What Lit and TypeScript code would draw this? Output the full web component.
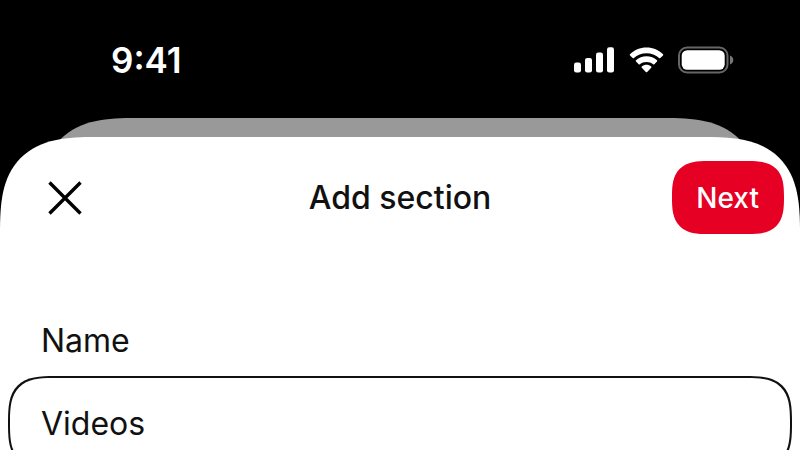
import { LitElement, html, css } from "lit";
import { customElement, state } from "lit/decorators.js";

@customElement("status-bar")
class StatusBar extends LitElement {
  static styles = css`
    :host {
      display: flex;
      align-items: center;
      justify-content: space-between;
      box-sizing: border-box;
      height: 118px;
      padding: 2px 66px 0 111px;
      color: #fff;
    }
    .time {
      font-size: 35px;
      line-height: 40px;
      font-weight: 600;
    }
    .icons {
      display: flex;
      align-items: center;
      gap: 14px;
    }
    svg {
      display: block;
    }
  `;

  render() {
    return html`
      <span class="time">9:41</span>
      <div class="icons">
        <svg width="41" height="26" viewBox="0 0 41 26" fill="#fff" role="img" aria-label="Signal">
          <rect x="0" y="15.5" width="7" height="10" rx="2.2" />
          <rect x="11" y="11" width="7" height="14.5" rx="2.2" />
          <rect x="22" y="5.5" width="7" height="20" rx="2.2" />
          <rect x="33" y="0.3" width="7" height="25.2" rx="2.2" />
        </svg>
        <svg width="35" height="26" viewBox="0 0 35 26" fill="#fff" role="img" aria-label="Wi-Fi">
          <path d="M17.5 0.5C24 0.5 29.9 3 34 7.2Q34.6 7.8 34 8.4L31.3 11.1Q30.7 11.6 30.1 11.1C26.8 8 22.3 6.2 17.5 6.2S8.200 8 4.900 11.100Q4.300 11.600 3.700 11.100L1 8.400Q0.400 7.800 1 7.200C5.100 3 11 0.500 17.500 0.500Z" />
          <path d="M17.5 9.200C21.500 9.200 25.200 10.700 28 13.300Q28.600 13.900 28 14.500L25.300 17.200Q24.700 17.700 24.100 17.200C22.300 15.700 20 14.900 17.500 14.900S12.700 15.700 10.900 17.200Q10.300 17.700 9.700 17.200L7 14.500Q6.400 13.900 7 13.300C9.800 10.700 13.500 9.200 17.500 9.200Z" />
          <path d="M17.500 17.800C19.300 17.800 20.900 18.400 22.200 19.500Q22.800 20.100 22.200 20.700L18.200 24.900Q17.500 25.500 16.800 24.900L12.800 20.700Q12.200 20.100 12.800 19.500C14.100 18.400 15.700 17.800 17.500 17.800Z" />
        </svg>
        <svg width="56" height="28" viewBox="0 0 56 28" role="img" aria-label="Battery">
          <rect x="1" y="1.5" width="48.5" height="25" rx="8" fill="none" stroke="#666" stroke-width="2" />
          <rect x="3.7" y="4.2" width="43" height="19.6" rx="5.5" fill="#fff" />
          <path d="M52 9.500C54 10.300 55.300 12 55.300 14S54 17.700 52 18.500Z" fill="#777" />
        </svg>
      </div>
    `;
  }
}

@customElement("app-root")
class AppRoot extends LitElement {
  static styles = css`
    :host {
      display: flex;
      flex-direction: column;
      height: 100vh;
      overflow: hidden;
      background: #000;
      color: #111;
      font-family: Inter, "Liberation Sans", sans-serif;
    }
    status-bar {
      flex: none;
    }
    .behind {
      flex: none;
      height: 100px;
      margin: 0 5% -81px;
      background: #999;
      border-radius: 96px 96px 0 0;
      corner-shape: superellipse(1.5);
    }
    .sheet {
      flex: 1 0 auto;
      background: #fff;
      border-radius: 96px 96px 0 0;
      corner-shape: superellipse(1.5);
    }
    .bar {
      display: grid;
      grid-template-columns: 1fr auto 1fr;
      align-items: center;
      padding: 24px 16px 0 40px;
    }
    h1 {
      margin: 0;
      padding-right: 24px;
      font-size: 32px;
      line-height: 40px;
      font-weight: 500;
    }
    button {
      border: 0;
      font: inherit;
      cursor: pointer;
    }
    .close {
      justify-self: start;
      padding: 8px;
      background: none;
      color: #000;
    }
    .close svg {
      display: block;
    }
    .next {
      justify-self: end;
      height: 73px;
      padding: 0 25px 0 24px;
      border-radius: 36px;
      corner-shape: superellipse(1.5);
      background: #e60023;
      color: #fff;
      font-size: 28px;
      line-height: 40px;
      font-weight: 500;
    }
    .field {
      display: flex;
      flex-direction: column;
      gap: 15px;
      padding: 87px 8px 0;
    }
    label {
      padding: 0 33px;
      font-size: 32px;
      line-height: 40px;
      color: #111;
    }
    input {
      box-sizing: border-box;
      width: 100%;
      height: 94px;
      padding: 0 31px;
      border: 2px solid #111;
      border-radius: 47px;
      corner-shape: superellipse(1.6);
      outline: none;
      background: #fff;
      color: #111;
      font: inherit;
      font-size: 32px;
    }
  `;

  @state() private name = "Videos";

  render() {
    return html`
      <status-bar></status-bar>
      <div class="behind"></div>
      <main class="sheet">
        <header class="bar">
          <button class="close" type="button" aria-label="Close">
            <svg width="34" height="34" viewBox="0 0 34 34" fill="none" stroke="currentColor" stroke-width="3.4">
              <path d="M1.5 1.5L32.5 32.5M32.5 1.5L1.5 32.5" />
            </svg>
          </button>
          <h1>Add section</h1>
          <button class="next" type="button">Next</button>
        </header>
        <div class="field">
          <label for="name">Name</label>
          <input
            id="name"
            type="text"
            .value=${this.name}
            @input=${(e: Event) => (this.name = (e.target as HTMLInputElement).value)}
          />
        </div>
      </main>
    `;
  }
}
